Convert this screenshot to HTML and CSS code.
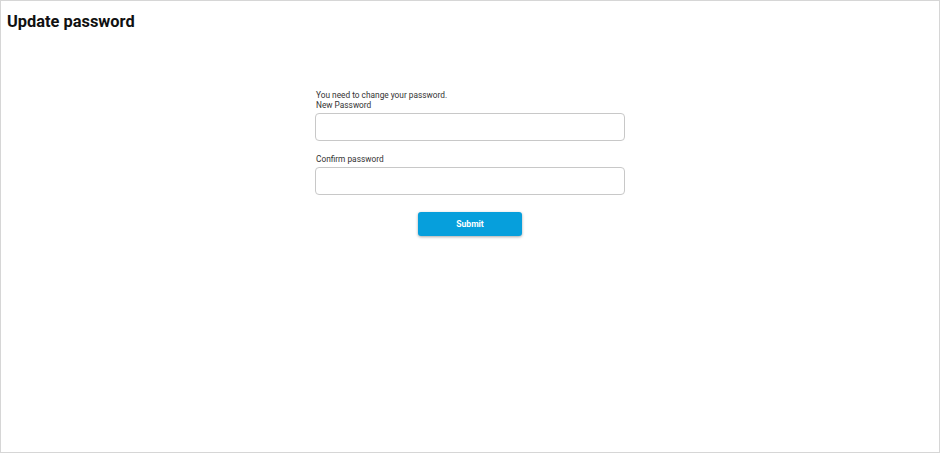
FILE: index.html
```html
<!DOCTYPE html>
<html lang="en">
<head>
<meta charset="utf-8">
<title>Update password</title>
<link rel="stylesheet" href="styles.css">
</head>
<body>
<div class="frame">
  <h1 class="title">Update password</h1>
  <form class="form">
    <p class="note">You need to change your password.</p>
    <label class="label" for="np">New Password</label>
    <input class="field" id="np" type="password">
    <label class="label label-gap" for="cp">Confirm password</label>
    <input class="field" id="cp" type="password">
    <div class="actions">
      <button class="submit" type="button">Submit</button>
    </div>
  </form>
</div>
</body>
</html>
```

FILE: styles.css
```css
* { box-sizing: border-box; }
html, body { margin: 0; height: 100%; }
body {
  font-family: Roboto, "Liberation Sans", Arial, sans-serif;
  background: #fff;
  color: #222;
}
.frame {
  height: 100%;
  border: 1px solid #d6d6d6;
  padding: 10px 6px;
}
.title {
  margin: 0;
  font-size: 16.4px;
  font-weight: 700;
  line-height: 22px;
  color: #111;
}
.form {
  width: 310px;
  margin: 57px auto 0;
  display: flex;
  flex-direction: column;
}
.note, .label {
  margin: 0;
  font-size: 8.3px;
  line-height: 10px;
  color: #333;
}
.note { padding-left: 1px; }
.label { padding-left: 1px; margin-bottom: 3px; }
.label-gap { margin-top: 13px; }
.field {
  height: 28px;
  border: 1px solid #c8c8c8;
  border-radius: 4px;
  background: #fff;
  outline: none;
}
.actions {
  display: flex;
  justify-content: center;
  margin-top: 17px;
}
.submit {
  width: 104px;
  height: 24px;
  border: none;
  border-radius: 3px;
  background: #069fdc;
  color: #fff;
  font-family: inherit;
  font-size: 8.6px;
  font-weight: 700;
  box-shadow: 0 1px 3px rgba(0,0,0,0.35);
}
```
